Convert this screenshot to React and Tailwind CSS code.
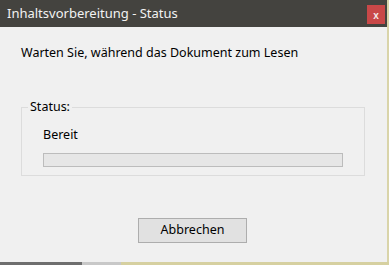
import React from "react";

const font = { fontFamily: '"Noto Sans", "Open Sans", sans-serif' };

const App = () => {
  return (
    <div className="w-[389px] h-[265px] flex flex-col overflow-hidden bg-[#f0f0f0]" style={font}>
      <div className="flex flex-1">
        {/* dialog window */}
        <div className="w-[387px] flex flex-col bg-[#f0f0f0]">
          <div className="h-[27px] bg-[#44433f] flex items-start justify-between pl-[7px] pr-[2px]">
            <span className="text-[13px] leading-[18px] mt-[4px] text-[#f2f2f2]">
              Inhaltsvorbereitung - Status
            </span>
            <button className="mt-[5px] w-[18px] h-[19px] bg-[#c94848] text-[#f4e8e8] text-[10px] font-semibold leading-none flex items-center justify-center">
              x
            </button>
          </div>

          <p className="mt-[17px] ml-[21px] text-[12.5px] leading-[18px] text-black">
            Warten Sie, während das Dokument zum Lesen
          </p>

          <fieldset className="mt-[36px] ml-[21px] w-[344px] border border-[#dcdcdc] pl-[21px] pb-[8px]">
            <legend className="-ml-[15px] px-[2px] text-[12.5px] leading-[18px] text-black">Status:</legend>
            <div className="mt-[10px] text-[12.5px] leading-[18px] text-black">Bereit</div>
            <div className="mt-[9px] w-[300px] h-[14px] bg-[#e6e6e6] border border-[#bcbcbc]" />
          </fieldset>

          <button className="mt-[42px] ml-[138px] w-[109px] h-[25px] bg-[#e1e1e1] border border-[#adadad] text-[12.5px] text-black">
            Abbrechen
          </button>
        </div>
        {/* desktop behind, right edge */}
        <div className="flex-1 bg-[#d9d4a9]" />
      </div>
      {/* taskbar strip along the bottom */}
      <div className="h-[3px] flex">
        <div className="w-[82px] bg-[#6e6e6e]" />
        <div className="w-[39px] bg-[#c8c8c8]" />
        <div className="flex-1 bg-[#d6d0a0]" />
      </div>
    </div>
  );
};

export default App;
